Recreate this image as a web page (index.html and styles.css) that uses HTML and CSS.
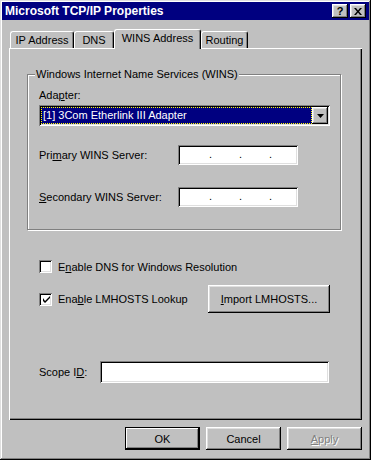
FILE: index.html
```html
<!DOCTYPE html>
<html lang="en">
<head>
    <meta charset="UTF-8">
    <title>Microsoft TCP/IP Properties</title>
    <link rel="stylesheet" href="styles.css">
</head>
<body>

<div class="window">
    <div class="titlebar">
        <span class="title">Microsoft TCP/IP Properties</span>
        <div class="title-buttons">
            <button class="title-btn raised">?</button>
            <button class="title-btn raised">
                <svg width="8" height="7" viewBox="0 0 8 7"><path d="M0 0h2l2 2.5L6 0h2L5 3.5 8 7H6L4 4.5 2 7H0l3-3.5z" fill="#000"/></svg>
            </button>
        </div>
    </div>

    <div class="content">
        <div class="tabs">
            <div class="tab tab-ip">IP Address</div>
            <div class="tab tab-dns">DNS</div>
            <div class="tab tab-wins active">WINS Address</div>
            <div class="tab tab-routing">Routing</div>
        </div>

        <div class="panel">
            <fieldset class="group">
                <legend>Windows Internet Name Services (WINS)</legend>
                <div class="field-label">Ada<u>p</u>ter:</div>
                <div class="combo sunken">
                    <div class="combo-value">[1] 3Com Etherlink III Adapter</div>
                    <div class="combo-btn raised">
                        <svg width="7" height="4" viewBox="0 0 7 4"><path d="M0 0h7L3.5 4z" fill="#000"/></svg>
                    </div>
                </div>
                <div class="ip-row ip-row-first">
                    <span class="ip-label">Pri<u>m</u>ary WINS Server:</span>
                    <div class="ip-box sunken"><span class="dot">.</span><span class="dot">.</span><span class="dot">.</span></div>
                </div>
                <div class="ip-row">
                    <span class="ip-label"><u>S</u>econdary WINS Server:</span>
                    <div class="ip-box sunken"><span class="dot">.</span><span class="dot">.</span><span class="dot">.</span></div>
                </div>
            </fieldset>

            <div class="check-row check-dns">
                <span class="checkbox sunken"></span>
                <span class="check-label">E<u>n</u>able DNS for Windows Resolution</span>
            </div>
            <div class="check-row check-lm">
                <span class="checkbox sunken">
                    <svg width="7" height="7" viewBox="0 0 7 7"><path d="M0 2v3l2 2L7 2V0L2 5z" fill="#000"/></svg>
                </span>
                <span class="check-label check-label-lm">Ena<u>b</u>le LMHOSTS Lookup</span>
                <button class="btn btn-import raised"><u>I</u>mport LMHOSTS...</button>
            </div>

            <div class="scope-row">
                <span class="scope-label">Scope I<u>D</u>:</span>
                <div class="scope-input sunken"></div>
            </div>
        </div>

        <div class="actions">
            <button class="btn btn-default">OK</button>
            <button class="btn raised">Cancel</button>
            <button class="btn raised btn-disabled"><u>A</u>pply</button>
        </div>
    </div>
</div>

</body>
</html>
```

FILE: styles.css
```css
body {
    margin: 0;
    font-family: 'Liberation Sans', Arial, sans-serif;
    font-size: 11px;
    color: #000;
    background-color: #c0c0c0;
}
button {
    font-family: inherit;
    font-size: 11px;
    color: #000;
    border: 0;
    padding: 0;
    white-space: nowrap;
    background-color: #c0c0c0;
}
.raised {
    background-color: #c0c0c0;
    box-shadow: inset -1px -1px #000, inset 1px 1px #fff, inset -2px -2px #808080, inset 2px 2px #dfdfdf;
}
.sunken {
    background-color: #fff;
    box-shadow: inset 1px 1px #808080, inset -1px -1px #fff, inset 2px 2px #000, inset -2px -2px #dfdfdf;
}
.window {
    width: 371px;
    height: 460px;
    box-sizing: border-box;
    padding: 2px;
    background-color: #c0c0c0;
    box-shadow: inset -1px -1px #000, inset 1px 1px #dfdfdf, inset -2px -2px #808080, inset 2px 2px #fff;
}

/* title bar */
.titlebar {
    display: flex;
    align-items: center;
    height: 18px;
    padding: 0 3px 0 3px;
    background-color: #000080;
    color: #fff;
}
.title {
    flex: 1;
    font-weight: bold;
    font-size: 12px;
}
.title-buttons {
    display: flex;
    gap: 2px;
}
.title-btn {
    display: flex;
    align-items: center;
    justify-content: center;
    width: 16px;
    height: 14px;
    font-weight: bold;
    font-size: 11px;
    line-height: 14px;
}

.content {
    padding: 9px 7px 0 7px;
}

/* tabs */
.tabs {
    display: flex;
    align-items: flex-end;
    height: 19px;
    padding-left: 1px;
}
.tab {
    box-sizing: border-box;
    height: 17px;
    padding-top: 2px;
    line-height: 13px;
    text-align: center;
    border-top: 1px solid #fff;
    border-left: 1px solid #fff;
    border-right: 1px solid #000;
    border-radius: 3px 3px 0 0;
    box-shadow: inset -1px 0 #808080;
}
.tab.active {
    height: 20px;
    margin-bottom: -1px;
    position: relative;
    z-index: 1;
    background-color: #c0c0c0;
}
.tab-ip { width: 64px; }
.tab-dns { width: 40px; }
.tab-wins { width: 87px; }
.tab-routing { width: 47px; }

.panel {
    box-sizing: border-box;
    height: 372px;
    padding: 20px 21px 0 18px;
    box-shadow: inset 1px 1px #fff, inset -1px -1px #000, inset -2px -2px #808080;
}

/* group box */
.group {
    margin: 0;
    padding: 0 10px 22px 11px;
    min-width: 0;
    border: 1px solid #808080;
    box-shadow: inset 1px 1px #fff, 1px 1px #fff;
}
.group legend {
    margin-left: -4px;
    padding: 0 1px;
    line-height: 13px;
    background-color: #c0c0c0;
}
.field-label {
    margin-top: 8px;
    line-height: 13px;
}
.combo {
    display: flex;
    box-sizing: border-box;
    width: 291px;
    height: 21px;
    margin-top: 3px;
    padding: 2px;
}
.combo-value {
    flex: 1;
    box-sizing: border-box;
    padding-left: 1px;
    border: 1px dotted #ffff00;
    background-color: #000080;
    color: #fff;
    line-height: 15px;
}
.combo-btn {
    display: flex;
    align-items: center;
    justify-content: center;
    width: 16px;
}
.ip-row {
    display: flex;
    align-items: center;
    margin-top: 22px;
}
.ip-row-first {
    margin-top: 19px;
}
.ip-label {
    width: 139px;
}
.ip-box {
    display: flex;
    box-sizing: border-box;
    width: 120px;
    height: 20px;
    padding-left: 31px;
    gap: 27px;
    line-height: 18px;
}
.dot {
    width: 3px;
}

/* checkboxes */
.check-row {
    display: flex;
    align-items: center;
    margin-left: 12px;
}
.check-dns {
    margin-top: 30px;
}
.check-lm {
    margin-top: 12px;
}
.checkbox {
    display: flex;
    align-items: center;
    justify-content: center;
    box-sizing: border-box;
    width: 13px;
    height: 13px;
    margin-right: 6px;
    padding: 1px 0 0 1px;
}
.check-label-lm {
    width: 150px;
}

.scope-row {
    display: flex;
    align-items: center;
    margin: 48px 0 0 12px;
}
.scope-label {
    width: 61px;
}
.scope-input {
    width: 229px;
    height: 22px;
}

/* dialog buttons */
.actions {
    display: flex;
    justify-content: flex-end;
    gap: 6px;
    margin-top: 7px;
}
.btn {
    width: 75px;
    height: 23px;
}
.btn-import {
    flex-shrink: 0;
    width: 122px;
    height: 28px;
}
.btn-default {
    box-shadow: inset 0 0 0 1px #000, inset -2px -2px #000, inset 2px 2px #fff, inset -3px -3px #808080;
}
.btn-disabled {
    color: #808080;
    text-shadow: 1px 1px #fff;
}
```
